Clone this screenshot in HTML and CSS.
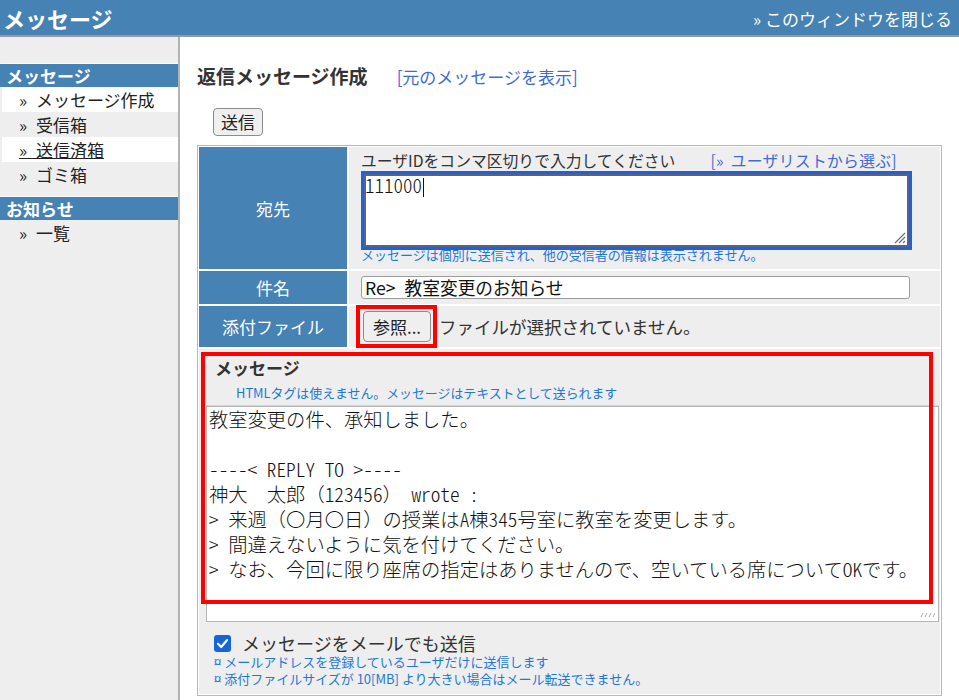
FILE: index.html
```html
<!DOCTYPE html>
<html lang="ja">
<head>
<meta charset="utf-8">
<title>メッセージ</title>
<link rel="stylesheet" href="styles.css">
</head>
<body>
<header class="topbar">
  <h1 class="brand">メッセージ</h1>
  <a class="close" href="#">» このウィンドウを閉じる</a>
</header>
<div class="layout">
  <nav class="side">
    <div class="side-group">
      <div class="side-head">メッセージ</div>
      <ul class="side-list">
        <li class="side-item lit"><a class="side-link" href="#">» メッセージ作成</a></li>
        <li class="side-item"><a class="side-link" href="#">» 受信箱</a></li>
        <li class="side-item lit"><a class="side-link current" href="#">» 送信済箱</a></li>
        <li class="side-item"><a class="side-link" href="#">» ゴミ箱</a></li>
      </ul>
    </div>
    <div class="side-group">
      <div class="side-head">お知らせ</div>
      <ul class="side-list">
        <li class="side-item"><a class="side-link" href="#">» 一覧</a></li>
      </ul>
    </div>
  </nav>
  <main class="main">
    <div class="title-row">
      <h2 class="title">返信メッセージ作成</h2>
      <a class="orig-link" href="#">[元のメッセージを表示]</a>
    </div>
    <div class="send-row"><button class="btn btn-send" type="button">送信</button></div>
    <div class="form">
      <div class="label">宛先</div>
      <div class="value to-cell">
        <div class="hint-row"><span class="hint">ユーザIDをコンマ区切りで入力してください</span><a class="hint-link" href="#">[» ユーザリストから選ぶ]</a></div>
        <div class="to-box">111000<span class="caret"></span>
          <svg class="grip grip-to" width="12" height="12" viewBox="0 0 12 12"><path d="M11 1 L1 11 M11 5 L5 11 M11 9 L9 11" stroke="#6f6f6f" stroke-width="1.2" fill="none"/></svg>
        </div>
        <div class="to-note">メッセージは個別に送信され、他の受信者の情報は表示されません。</div>
      </div>
      <div class="label">件名</div>
      <div class="value subject-cell">
        <div class="subject-box">Re&gt; 教室変更のお知らせ</div>
      </div>
      <div class="label">添付ファイル</div>
      <div class="value file-cell">
        <span class="annot"><button class="btn btn-file" type="button">参照...</button></span>
        <span class="file-status">ファイルが選択されていません。</span>
      </div>
      <div class="message-cell">
        <div class="msg-head">メッセージ</div>
        <div class="msg-note">HTMLタグは使えません。メッセージはテキストとして送られます</div>
        <div class="msg-box">教室変更の件、承知しました。

----&lt; REPLY TO &gt;----
<span class="fw">神大　太郎（</span>123456<span class="fw">）</span> wrote :
&gt; <span class="fw">来週（〇月〇日）の授業は</span>A棟345号室に教室を変更します。
&gt; 間違えないように気を付けてください。
&gt; なお、今回に限り座席の指定はありませんので、空いている席についてOKです。<svg class="grip grip-msg" width="16" height="6" viewBox="0 0 16 6"><path d="M2 5 L4 1 M6 5 L8 1 M10 5 L12 1 M14 5 L16 1" stroke="#a8a8a8" stroke-width="1" fill="none"/></svg></div>
        <div class="check-row">
          <span class="checkbox"><svg width="17" height="17" viewBox="0 0 17 17"><rect x="0" y="0" width="17" height="17" rx="3" fill="#1565d8"/><path d="M4 8.8 L7.2 12 L13 5.2" stroke="#fff" stroke-width="2.2" fill="none" stroke-linecap="round" stroke-linejoin="round"/></svg></span>
          <span class="check-label">メッセージをメールでも送信</span>
        </div>
        <div class="mail-note">¤ メールアドレスを登録しているユーザだけに送信します</div>
        <div class="mail-note">¤ 添付ファイルサイズが 10[MB] より大きい場合はメール転送できません。</div>
        <div class="annot-msg"></div>
      </div>
    </div>
  </main>
</div>
</body>
</html>
```
FILE: styles.css
```css
* { box-sizing: border-box; }
html, body { margin: 0; padding: 0; }
body {
  width: 959px;
  height: 700px;
  overflow: hidden;
  font-family: "Noto Sans CJK JP", "Noto Sans", sans-serif;
  color: #222;
  background: #fff;
}
a { text-decoration: none; }

/* top bar */
.topbar {
  height: 37px;
  background: #4682b4;
  border-bottom: 2px solid #9a9a9a;
  display: flex;
  justify-content: space-between;
  align-items: center;
  padding: 0 7px 0 3px;
  color: #fff;
}
.brand { margin: 0; font-size: 22px; font-weight: 700; line-height: 35px; padding-top: 1px; }
.close { font-size: 17px; color: #fff; line-height: 35px; padding-top: 1px; }

/* layout */
.layout { display: flex; height: 663px; }

/* sidebar */
.side {
  width: 180px;
  flex: none;
  background: #eee;
  border-right: 2px solid #b3b3b3;
  padding-top: 26px;
}
.side-group + .side-group { margin-top: 9px; }
.side-head {
  border-top: 1px solid #f9f9f9;
  background: #4682b4;
  color: #fff;
  font-weight: 700;
  font-size: 17px;
  line-height: 23px;
  padding-left: 6px;
}
.side-list { list-style: none; margin: 0; padding: 0; }
.side-item { margin-left: 2px; line-height: 25px; height: 25px; font-size: 17px; padding-left: 17px; }
.side-item.lit { background: #fff; }
.side-link { color: #222; word-spacing: 5px; }
.side-link.current { text-decoration: underline; }

/* main */
.main { flex: 1; padding: 26px 17px 0 17px; }
.title-row { display: flex; align-items: baseline; gap: 29px; height: 26px; line-height: 26px; }
.title { margin: 0; font-size: 19px; font-weight: 700; color: #333; }
.orig-link { font-size: 17px; color: #3f6bd6; }

.send-row { margin-top: 19px; padding-left: 16px; height: 28px; }
.btn {
  font-family: inherit;
  font-size: 17px;
  color: #222;
  background: #efefef;
  border: 1px solid #8d8d8d;
  border-radius: 4px;
  padding: 0;
  cursor: pointer;
}
.btn-send { width: 50px; height: 28px; line-height: 26px; }

/* form grid */
.form {
  margin-top: 9px;
  border: 1px solid #b9b9b9;
  padding: 1px;
  background: #fff;
  display: grid;
  grid-template-columns: 148px 1fr;
  grid-template-rows: 122px 33px 41px auto;
  gap: 2px;
}
.label {
  background: #4682b4;
  color: #fff;
  font-size: 17px;
  display: flex;
  align-items: center;
  justify-content: center;
}
.value { background: #eee; }

.to-cell { padding: 4px 0 0 12px; }
.hint-row { display: flex; font-size: 15.8px; line-height: 20px; color: #333; }
.hint-link { margin-left: 35px; color: #3f6bd6; word-spacing: 3px; letter-spacing: 0.3px; }
.to-box {
  position: relative;
  z-index: 1;
  width: 551px;
  height: 79px;
  background: #fff;
  border: 3px solid #1a64d8;
  box-shadow: inset 0 0 0 2px #5c5e8c;
  padding: 1px 0 0 1px;
  font-size: 19px;
  font-weight: 300;
  line-height: 20px;
  font-feature-settings: "hwid" 1;
  color: #111;
}
.caret { display: inline-block; width: 1px; height: 19px; background: #111; vertical-align: -4px; margin-left: 1px; }
.grip { position: absolute; }
.grip-to { right: 3px; bottom: 3px; }
.to-note { margin-top: -2px; font-size: 13px; line-height: 14px; color: #1f78d8; }

.subject-cell { padding: 5px 0 0 12px; }
.subject-box {
  width: 549px;
  height: 23px;
  background: #fff;
  border: 1px solid #9d9d9d;
  border-radius: 3px;
  font-size: 17.7px;
  line-height: 21px;
  padding-left: 3px;
  word-spacing: 5px;
  color: #111;
}

.file-cell { display: flex; align-items: center; padding-left: 7px; }
.annot { display: inline-block; border: 4px solid #ff0000; padding: 2px 2px 2px 3px; margin: -1px 0; }
.btn-file { display: block; width: 68px; height: 31px; line-height: 29px; }
.file-status { margin-left: 2px; font-size: 17.5px; color: #333; }

/* message */
.message-cell {
  grid-column: 1 / -1;
  background: #eee;
  position: relative;
  padding: 7px 1px 7px 7px;
}
.msg-head { font-size: 17px; font-weight: 700; color: #333; line-height: 24px; padding-left: 9px; }
.msg-note { margin-top: 4px; font-size: 12.9px; line-height: 18px; padding-left: 30px; color: #1f78d8; }
.msg-box {
  position: relative;
  margin-top: 4px;
  height: 216px;
  background: #fff;
  border: 1px solid #b5b5b5;
  box-shadow: 0 -1px 0 #d6d6d6;
  padding: 0 2px;
  font-size: 19.3px;
  font-weight: 300;
  line-height: 25px;
  font-feature-settings: "hwid" 1;
  white-space: pre;
  color: #111;
}
.fw { font-feature-settings: normal; }
.grip-msg { right: 3px; bottom: 3px; }
.check-row { margin-top: 11px; height: 20px; display: flex; align-items: center; padding-left: 8px; }
.checkbox { width: 17px; height: 17px; display: block; }
.checkbox svg { display: block; }
.check-label { margin-left: 11px; font-size: 18px; line-height: 20px; color: #333; }
.mail-note { font-size: 13px; line-height: 17px; padding-left: 8px; color: #1f78d8; }

.annot-msg {
  position: absolute;
  left: 2px;
  top: 3px;
  width: 732px;
  height: 252px;
  border: 4px solid #ff0000;
  pointer-events: none;
}
```
